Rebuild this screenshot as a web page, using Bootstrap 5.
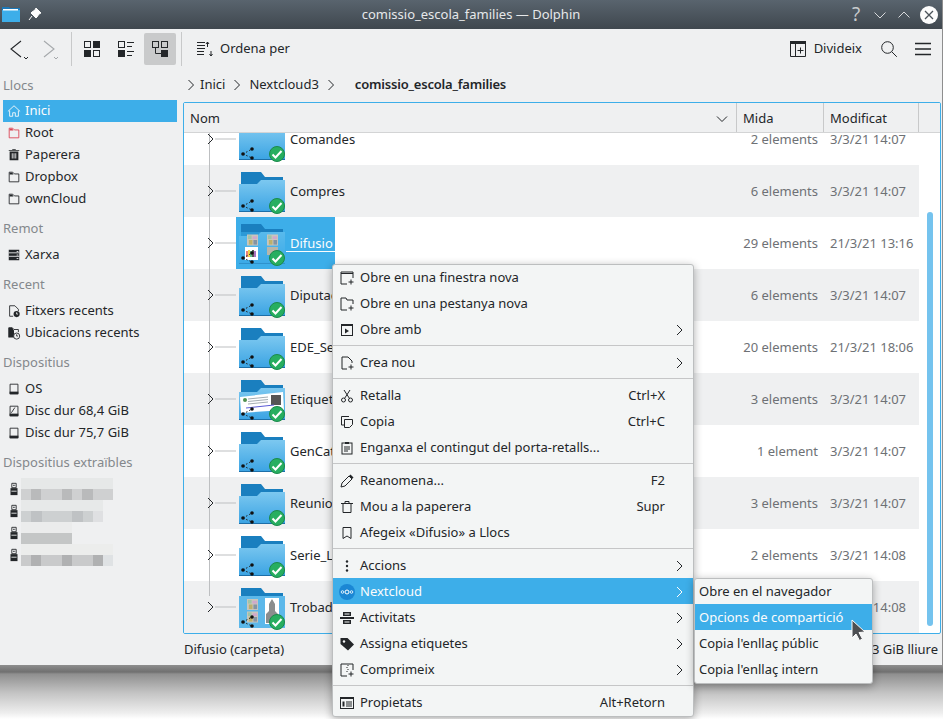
<!DOCTYPE html>
<html lang="ca">
<head>
  <meta charset="UTF-8">
  <title>comissio_escola_families — Dolphin</title>
  <meta name="viewport" content="width=device-width, initial-scale=1">
  <link href="https://cdn.jsdelivr.net/npm/bootstrap@5.3.3/dist/css/bootstrap.min.css" rel="stylesheet">
  <style>
    html, body { height: 719px; overflow: hidden; }
    body { position: relative; background: linear-gradient(#8e8e8e 0, #747474 6px, #707070 7px, #8f8f8f 9px, #c4c4c4 28px, #eeeeee 48px, #fff 54px) 0 665px / 100% 54px no-repeat #fff; font: 13px/1.2 "Noto Sans", sans-serif; color: #232629; }
    svg { display: block; flex: none; }
    .win { width: 942px; height: 665px; background: #eff0f1; box-shadow: 1px 0 0 #8e8e8e; }
    .titlebar { height: 29px; background: linear-gradient(#59646e, #3f474e); color: #fcfcfc; position: relative; }
    .wintitle { width: 100%; text-align: center; line-height: 29px; color: #e6e8ea; }
    .tb-left { position: absolute; left: 2px; top: 6px; }
    .tb-right { position: absolute; right: 4px; top: 5px; }
    .tb-help { width: 16px; font-size: 19px; line-height: 19px; color: #c8cbce; }
    .toolbar { height: 40px; padding: 0 11px 0 9px; }
    .tool-sep { width: 1px; height: 34px; background: #c8c9ca; }
    .tool-btn { width: 32px; height: 32px; border-radius: 2px; }
    .tool-on { background: #c9cacb; }
    .main { height: 596px; }
    .side { width: 183px; flex: none; }
    .side-head { height: 34px; padding: 9px 0 0 3px; color: #84888c; font-size: 13px; line-height: 18px; }
    .side-head-first { height: 31px; padding-top: 7px; }
    .side-item { height: 22px; margin: 0 6px 0 3px; padding-left: 4px; gap: 4px; }
    .side-on { background: #3daee9; color: #fcfcfc; }
    .blur-name { margin-left: -4px; }
    .right-pane { width: 758px; }
    .crumbs { height: 33px; padding: 0 0 1px 4px; font-size: 13px; }
    .crumbs b { font-weight: 600; letter-spacing: -.2px; margin-left: 12px; }
    .file-view { height: 532px; border: 1px solid #3daee9; border-radius: 2px; background: #fff; overflow: hidden; }
    .head-row { height: 30px; background: #eff0f1; border-bottom: 1px solid #d3d4d5; }
    .hcell { height: 29px; padding: 2px 0 0 6px; border-right: 1px solid #c8c9ca; }
    .c-name { width: 553px; }
    .c-size { width: 87px; }
    .c-date { width: 95px; }
    .file-list { width: 735px; height: 500px; overflow: hidden; }
    .file-rows { margin-top: -20px; }
    .frow { height: 52px; background: #fff; }
    .frow:nth-child(even) { background: #eff0f1; }
    .fname { padding: 2px 0 0 2px; width: 448px; flex: none; white-space: nowrap; }
    .fsize { width: 82px; flex: none; padding-top: 2px; text-align: right; color: #6e7175; }
    .fsize-sel { width: 483px; }
    .fdate { padding: 2px 0 0 12px; color: #6e7175; white-space: nowrap; }
    .sel-box { background: #3daee9; width: 99px; height: 52px; position: relative; flex: none; }
    .sel-name { color: #fcfcfc; padding: 2px 0 0 54px; }
    .sel-line { position: absolute; left: 50px; right: 0; top: 34px; height: 1px; background: #fcfcfc; }
    .track { width: 21px; }
    .thumb { width: 6px; height: 414px; margin: 79px 0 0 8px; background: #75c3ee; border-radius: 3px; }
    .statusbar { height: 31px; padding: 0 3px 0 1px; }
    .pop { position: absolute; background: #f3f5f5; border: 1px solid #bcbebf; border-radius: 3px; box-shadow: 0 2px 9px rgba(0,0,0,.32); }
    .menu-main { left: 332px; top: 264px; width: 362px; }
    .menu-sub { left: 694px; top: 578px; width: 179px; }
    .mi { height: 26px; padding: 0 13px 0 6px; gap: 5px; white-space: nowrap; }
    .menu-sub .mi { padding-left: 4px; }
    .mi-on { background: #3daee9; color: #fcfcfc; margin: -1px 0 1px; padding-top: 2px; }
    .menu-sub .mi-on { padding-top: 2px; }
    .mi-key { margin-left: auto; margin-right: 15px; }
    .mi-arrow { margin-left: auto; margin-right: -8px; }
    .msep { height: 7px; padding-top: 2px; }
    .msep i { display: block; height: 1px; background: #c5c6c7; }
    .pointer { position: absolute; left: 851px; top: 619px; }
  </style>
</head>
<body>

<svg width="0" height="0" style="position:absolute">
  <defs>
    <linearGradient id="fg" x1="0" y1="0" x2="0" y2="1"><stop offset="0" stop-color="#7cc8f0"/><stop offset="1" stop-color="#3aa3e3"/></linearGradient>
    <symbol id="folder" viewBox="0 0 52 52">
      <path d="M5 7h20l4 5h18v9H5z" fill="#1a7fbf"/>
      <path d="M3 19h18l4-4h24v32H3z" fill="url(#fg)"/>
      <rect x="3" y="46" width="46" height="1" fill="#1d6fa8"/>
    </symbol>
    <symbol id="overlay" viewBox="0 0 52 52">
      <path d="M7 41l9-5M7 41l9 4" stroke="#222" stroke-width="1" stroke-dasharray="1.5 2" fill="none"/>
      <circle cx="7" cy="41" r="1.8" fill="#111"/><circle cx="16" cy="36" r="1.8" fill="#111"/><circle cx="16" cy="45" r="1.8" fill="#111"/>
      <circle cx="41" cy="41" r="7.500" fill="#27ae60" stroke="#1b8a4b" stroke-width="1"/>
      <path d="M36.500 41.500l3 3 6-6.500" stroke="#fff" stroke-width="2" fill="none"/>
    </symbol>
    <symbol id="pic" viewBox="0 0 12 12">
      <rect width="12" height="12" fill="#c9c6bd"/>
      <rect x="1" y="1" width="4" height="4" fill="#9fc4a8"/><rect x="6" y="2" width="5" height="3" fill="#d0a8cb"/>
      <rect x="2" y="6" width="4" height="5" fill="#bdb06c"/><rect x="7" y="6" width="4" height="5" fill="#8494a3"/>
    </symbol>
    <symbol id="chev" viewBox="0 0 16 16"><path d="M5 3l5 5-5 5" fill="none" stroke="currentColor"/></symbol>
    <symbol id="win-plus" viewBox="0 0 16 16"><path d="M8 14H2V2h12v6" fill="none" stroke="currentColor"/><path d="M2 3.500h12" stroke="currentColor"/><path d="M12 9.500v5M9.500 12h5" stroke="currentColor"/></symbol>
    <symbol id="tab-plus" viewBox="0 0 16 16"><path d="M8 14H2V2h5l1 2h6v4" fill="none" stroke="currentColor"/><path d="M12 9.500v5M9.500 12h5" stroke="currentColor"/></symbol>
    <symbol id="doc-plus" viewBox="0 0 16 16"><path d="M8 14H3V2h6l4 4v2" fill="none" stroke="currentColor"/><path d="M12 9.500v5M9.500 12h5" stroke="currentColor"/></symbol>
    <symbol id="open-with" viewBox="0 0 16 16"><rect x="2.500" y="2.500" width="11" height="11" fill="none" stroke="currentColor"/><path d="M2 2h12v2H2z" fill="currentColor"/><path d="M6 6.500l4 2.500-4 2.500z" fill="currentColor"/></symbol>
    <symbol id="cut" viewBox="0 0 16 16"><circle cx="4.500" cy="12" r="2" fill="none" stroke="currentColor"/><circle cx="11.500" cy="12" r="2" fill="none" stroke="currentColor"/><path d="M5.500 10.500L11 2M10.500 10.500L5 2" stroke="currentColor" fill="none"/></symbol>
    <symbol id="copy" viewBox="0 0 16 16"><path d="M10 2.500H2.500V11H5" fill="none" stroke="currentColor"/><path d="M5.500 5.500h8v5l-3 3h-5z" fill="none" stroke="currentColor"/></symbol>
    <symbol id="paste" viewBox="0 0 16 16"><rect x="3" y="3" width="10" height="11" fill="none" stroke="currentColor"/><path d="M6 2h4v2H6z" fill="currentColor"/><path d="M5 7h6M5 9h6M5 11h4" stroke="currentColor"/></symbol>
    <symbol id="pencil" viewBox="0 0 16 16"><path d="M2 14l1-4 7-7 3 3-7 7z" fill="none" stroke="currentColor"/><path d="M10 3l1.500-1.500 3 3L13 6z" fill="currentColor"/></symbol>
    <symbol id="trash-o" viewBox="0 0 16 16"><path d="M2 4.500h12M6 4.500v-2h4v2M4 4.500v9h8v-9" fill="none" stroke="currentColor"/></symbol>
    <symbol id="bookmark" viewBox="0 0 16 16"><path d="M4 2.500h8v11l-4-2.500-4 2.500z" fill="none" stroke="currentColor"/></symbol>
    <symbol id="dots" viewBox="0 0 16 16"><circle cx="8" cy="3.500" r="1.200" fill="currentColor"/><circle cx="8" cy="8" r="1.200" fill="currentColor"/><circle cx="8" cy="12.500" r="1.200" fill="currentColor"/></symbol>
    <symbol id="activity" viewBox="0 0 16 16"><path d="M4 2h8v4H4zM1 7h14v2H1zM4 10h8v4H4z" fill="currentColor"/><path d="M5.500 12h5" stroke="#f3f5f5"/><path d="M5.500 4h5" stroke="#f3f5f5"/></symbol>
    <symbol id="tag" viewBox="0 0 16 16"><path d="M1.500 2h7l6.500 6.500-6 6L1.500 8z" fill="currentColor"/><circle cx="5" cy="5.500" r="1.200" fill="#f3f5f5"/></symbol>
    <symbol id="zip" viewBox="0 0 16 16"><path d="M8 14H2V2h12v6" fill="none" stroke="currentColor"/><path d="M9 3v1M8 5v1M9 7v1M8 9v1" stroke="currentColor"/><path d="M12 9.500v5M9.500 12h5" stroke="currentColor"/></symbol>
    <symbol id="props" viewBox="0 0 16 16"><rect x="1.500" y="2.500" width="13" height="11" fill="none" stroke="currentColor"/><path d="M1.500 2h13v2h-13z" fill="currentColor"/><path d="M3.500 6.500h2v5h-2z" fill="currentColor"/><path d="M7 7h6M7 9h6M7 11h6" stroke="currentColor"/></symbol>
    <symbol id="home" viewBox="0 0 16 16"><path d="M1 8.500l7-6.500 7 6.500M3 7.500v6.500h3.500V10h3v4H13V7.500" fill="none" stroke="currentColor"/></symbol>
    <symbol id="folder-o" viewBox="0 0 16 16"><path d="M2.500 13.500v-11h4l2 2h5v9z" fill="none" stroke="currentColor"/><path d="M3 3h3l1.500 2H3z" fill="currentColor"/></symbol>
    <symbol id="trash-f" viewBox="0 0 16 16"><path d="M3 4h10v10H3zM2 2.500h12v1H2zM6 1h4v1H6z" fill="currentColor"/><path d="M6 6v6M8 6v6M10 6v6" stroke="#eff0f1"/></symbol>
    <symbol id="network" viewBox="0 0 16 16"><path d="M2 2h12v12H2z" fill="currentColor"/><path d="M2 5.500h12M2 9.500h12" stroke="#eff0f1"/><path d="M11 4h2M11 8h2M11 12h2" stroke="#eff0f1"/></symbol>
    <symbol id="doc-clock" viewBox="0 0 16 16"><path d="M7 14H3V2h6l4 4v2" fill="none" stroke="currentColor"/><circle cx="11" cy="11.500" r="3.500" fill="currentColor"/><path d="M11 9.500v2h1.500" stroke="#eff0f1" fill="none"/></symbol>
    <symbol id="folder-clock" viewBox="0 0 16 16"><path d="M2 13V2h4l2 2h5v3" fill="none" stroke="currentColor"/><path d="M2 2h4l2 3H2zM2 5h6v8H2z" fill="currentColor"/><circle cx="11" cy="11.500" r="3.500" fill="#eff0f1" stroke="currentColor"/><path d="M11 9.500v2h1.500" stroke="currentColor" fill="none"/></symbol>
    <symbol id="drive" viewBox="0 0 16 16"><path d="M3.500 2.500h9v11h-9z" fill="none" stroke="currentColor"/><path d="M3 11h10v3H3z" fill="currentColor"/></symbol>
    <symbol id="drive-x" viewBox="0 0 16 16"><path d="M3.500 2.500h9v11h-9z" fill="none" stroke="currentColor"/><path d="M3 11h10v3H3z" fill="currentColor"/><path d="M5 10l4-6" stroke="currentColor"/></symbol>
    <symbol id="usb" viewBox="0 0 16 16"><path d="M5.500 1.500h5v5h-5z" fill="none" stroke="currentColor"/><path d="M7 3h.8v1.500H7zM8.500 3h.8v1.500h-.8z" fill="currentColor"/><path d="M4 7h8v8H4z" fill="currentColor"/><path d="M5 10.500h6" stroke="#eff0f1"/></symbol>
  </defs>
</svg>

<div class="win">
  <div class="titlebar d-flex align-items-center">
    <div class="tb-left d-flex align-items-center gap-2">
      <svg width="18" height="16" viewBox="0 0 18 16"><path d="M0 1h7l1 1h10v13H0z" fill="#1c78b8"/><path d="M0 4h18v12H0z" fill="#3daee9"/><path d="M1 3h15v1.500H1z" fill="#fff"/></svg>
      <svg width="14" height="14" viewBox="0 0 14 14"><path d="M8 1l5 5-2 1-2 3-1 1-5-5 1-1 3-2zM4 9l-3 4" fill="#fcfcfc" stroke="#fcfcfc"/></svg>
    </div>
    <div class="wintitle">comissio_escola_families — Dolphin</div>
    <div class="tb-right d-flex align-items-center gap-2">
      <span class="tb-help text-center">?</span>
      <svg width="16" height="16" viewBox="0 0 16 16"><path d="M2.500 5.500L8 11l5.500-5.500" fill="none" stroke="#d8dadc"/></svg>
      <svg width="16" height="16" viewBox="0 0 16 16"><path d="M2.500 10.500L8 5l5.500 5.500" fill="none" stroke="#d8dadc"/></svg>
      <svg width="18" height="18" viewBox="0 0 18 18"><circle cx="9" cy="9" r="9" fill="#fcfcfc"/><path d="M5 5l8 8M13 5l-8 8" stroke="#4a5259" stroke-width="1.300"/></svg>
    </div>
  </div>

  <div class="toolbar d-flex align-items-center">
    <svg width="22" height="28" viewBox="0 0 22 28"><path d="M12 6L2 14l10 8" fill="none" stroke="#232629" stroke-width="1.100"/><path d="M15 22l2 2 2-2" fill="none" stroke="#232629"/></svg>
    <svg class="ms-2" width="22" height="28" viewBox="0 0 22 28"><path d="M5 6l10 8-10 8" fill="none" stroke="#a5a8ab" stroke-width="1.100"/><path d="M15 22l2 2 2-2" fill="none" stroke="#a5a8ab"/></svg>
    <div class="tool-sep" style="margin-left:10px"></div>
    <div class="tool-btn d-flex align-items-center justify-content-center ms-1">
      <svg width="16" height="16" viewBox="0 0 16 16"><rect x=".5" y=".5" width="6" height="6" fill="none" stroke="#232629"/><rect x="9" width="7" height="7" fill="#232629"/><rect y="9" width="7" height="7" fill="#232629"/><rect x="9.500" y="9.500" width="6" height="6" fill="none" stroke="#232629"/></svg>
    </div>
    <div class="tool-btn d-flex align-items-center justify-content-center" style="margin-left:2px">
      <svg width="16" height="16" viewBox="0 0 16 16"><rect x=".5" y=".5" width="6" height="6" fill="none" stroke="#232629"/><rect y="9" width="7" height="7" fill="#232629"/><path d="M9 1.500h7M9 5.500h5M9 10.500h7M9 14.500h5" stroke="#232629"/></svg>
    </div>
    <div class="tool-btn tool-on d-flex align-items-center justify-content-center" style="margin-left:2px">
      <svg width="16" height="16" viewBox="0 0 16 16"><rect x=".5" y=".5" width="6" height="6" fill="none" stroke="#232629"/><rect x="9.500" y=".5" width="6" height="6" fill="none" stroke="#232629"/><path d="M3.500 7v5.500H9" fill="none" stroke="#232629"/><rect x="9" y="9" width="7" height="7" fill="#232629"/></svg>
    </div>
    <div class="tool-sep" style="margin-left:5px"></div>
    <svg width="16" height="16" viewBox="0 0 16 16" style="margin-left:15px"><path d="M0 1.500h8M0 4.500h8M0 7.500h8M0 10.500h7M0 13.500h7" stroke="#232629"/><path d="M10.500 6V1m0 0L9 3m1.500-2L12 3M14 10v5m0 0l-1.500-2m1.500 2l1.500-2" stroke="#232629" fill="none"/></svg>
    <span style="margin-left:7px">Ordena per</span>
    <svg class="ms-auto" width="16" height="16" viewBox="0 0 16 16"><path d="M.5 2.500h15v13H.5zM5.500 2.500v13" fill="none" stroke="#232629"/><path d="M0 0h16v3H0z" fill="#232629"/><path d="M10.500 6.500v6M7.500 9.500h6" stroke="#232629"/></svg>
    <span class="ms-2">Divideix</span>
    <svg width="16" height="16" viewBox="0 0 16 16" style="margin-left:19px"><circle cx="6.500" cy="6.500" r="5.800" fill="none" stroke="#232629"/><path d="M10.800 10.800l5 5" stroke="#232629"/></svg>
    <svg width="16" height="16" viewBox="0 0 16 16" style="margin-left:18px"><path d="M0 2.500h16M0 8h16M0 13.500h16" stroke="#232629" stroke-width="1.700"/></svg>
  </div>

  <div class="main d-flex">
    <div class="side">
      <div class="side-head side-head-first">Llocs</div>
      <div class="side-item side-on d-flex align-items-center"><svg width="14" height="14"><use href="#home"/></svg><span>Inici</span></div>
      <div class="side-item d-flex align-items-center"><svg width="14" height="14" style="color:#da4453"><use href="#folder-o"/></svg><span>Root</span></div>
      <div class="side-item d-flex align-items-center"><svg width="14" height="14"><use href="#trash-f"/></svg><span>Paperera</span></div>
      <div class="side-item d-flex align-items-center"><svg width="14" height="14"><use href="#folder-o"/></svg><span>Dropbox</span></div>
      <div class="side-item d-flex align-items-center"><svg width="14" height="14"><use href="#folder-o"/></svg><span>ownCloud</span></div>
      <div class="side-head">Remot</div>
      <div class="side-item d-flex align-items-center"><svg width="14" height="14"><use href="#network"/></svg><span>Xarxa</span></div>
      <div class="side-head">Recent</div>
      <div class="side-item d-flex align-items-center"><svg width="14" height="14"><use href="#doc-clock"/></svg><span>Fitxers recents</span></div>
      <div class="side-item d-flex align-items-center"><svg width="14" height="14"><use href="#folder-clock"/></svg><span>Ubicacions recents</span></div>
      <div class="side-head">Dispositius</div>
      <div class="side-item d-flex align-items-center"><svg width="14" height="14"><use href="#drive"/></svg><span>OS</span></div>
      <div class="side-item d-flex align-items-center"><svg width="14" height="14"><use href="#drive-x"/></svg><span>Disc dur 68,4 GiB</span></div>
      <div class="side-item d-flex align-items-center"><svg width="14" height="14"><use href="#drive"/></svg><span>Disc dur 75,7 GiB</span></div>
      <div class="side-head">Dispositius extraïbles</div>
      <div class="side-item d-flex align-items-center"><svg width="14" height="14"><use href="#usb"/></svg>
        <svg class="blur-name" width="92" height="22" viewBox="0 0 9 2" preserveAspectRatio="none" shape-rendering="crispEdges"><path d="M0 0h9v1H0z" fill="#e6e8e8"/><path d="M0 1h9v1H0z" fill="#cfd0d1"/><path d="M1 1h1v1H1zM4 1h1v1H4zM6 1h1v1H6z" fill="#b9babb"/></svg></div>
      <div class="side-item d-flex align-items-center"><svg width="14" height="14"><use href="#usb"/></svg>
        <svg class="blur-name" width="82" height="22" viewBox="0 0 8 2" preserveAspectRatio="none" shape-rendering="crispEdges"><path d="M0 0h8v1H0z" fill="#e7e9e9"/><path d="M0 1h8v1H0z" fill="#cdd0d1"/><path d="M1 1h1v1H1zM5 1h1v1H5z" fill="#bfc2c4"/><path d="M7 1h1v1H7z" fill="#dfe0e2"/></svg></div>
      <div class="side-item d-flex align-items-center"><svg width="14" height="14"><use href="#usb"/></svg>
        <svg class="blur-name" width="51" height="22" viewBox="0 0 5 2" preserveAspectRatio="none" shape-rendering="crispEdges"><path d="M0 0h5v1H0z" fill="#ebecec"/><path d="M0 1h5v1H0z" fill="#c4c6c6"/></svg></div>
      <div class="side-item d-flex align-items-center"><svg width="14" height="14"><use href="#usb"/></svg>
        <svg class="blur-name" width="92" height="22" viewBox="0 0 9 2" preserveAspectRatio="none" shape-rendering="crispEdges"><path d="M0 0h9v1H0z" fill="#ecedec"/><path d="M0 1h9v1H0z" fill="#c9cacb"/><path d="M1 1h1v1H1zM4 1h1v1H4zM7 1h1v1H7z" fill="#b0b1b2"/><path d="M8 1h1v1H8z" fill="#dfe2e4"/></svg></div>
    </div>

    <div class="right-pane">
      <div class="crumbs d-flex align-items-center">
        <svg width="8" height="12" viewBox="0 0 8 12"><path d="M1.500 1l5 5-5 5" fill="none" stroke="#232629"/></svg>
        <span style="margin-left:5px">Inici</span>
        <svg class="mx-2" width="8" height="12" viewBox="0 0 8 12"><path d="M1.500 1l5 5-5 5" fill="none" stroke="#232629"/></svg>
        <span>Nextcloud3</span>
        <svg class="mx-2" width="8" height="12" viewBox="0 0 8 12"><path d="M1.500 1l5 5-5 5" fill="none" stroke="#232629"/></svg>
        <b>comissio_escola_families</b>
      </div>

      <div class="file-view">
        <div class="head-row d-flex">
          <div class="hcell c-name d-flex align-items-center justify-content-between pe-2"><span>Nom</span>
            <svg width="12" height="12" viewBox="0 0 12 12"><path d="M1 3.500l5 5 5-5" fill="none" stroke="#232629"/></svg></div>
          <div class="hcell c-size d-flex align-items-center">Mida</div>
          <div class="hcell c-date d-flex align-items-center">Modificat</div>
        </div>
        <div class="d-flex">
          <div class="file-list">
            <div class="file-rows">
              <div class="frow d-flex align-items-center">
                <svg width="52" height="52"><path d="M25.500 0v52M31 26h21" stroke="#bdbfc1"/><path d="M24 21l5 5-5 5" fill="none" stroke="#232629"/></svg>
                <svg width="52" height="52"><use href="#folder"/><use href="#overlay"/></svg>
                <span class="fname">Comandes</span><span class="fsize">2 elements</span><span class="fdate">3/3/21 14:07</span>
              </div>
              <div class="frow d-flex align-items-center">
                <svg width="52" height="52"><path d="M25.500 0v52M31 26h21" stroke="#bdbfc1"/><path d="M24 21l5 5-5 5" fill="none" stroke="#232629"/></svg>
                <svg width="52" height="52"><use href="#folder"/><use href="#overlay"/></svg>
                <span class="fname">Compres</span><span class="fsize">6 elements</span><span class="fdate">3/3/21 14:07</span>
              </div>
              <div class="frow d-flex align-items-center">
                <svg width="52" height="52"><path d="M25.500 0v52M31 26h21" stroke="#bdbfc1"/><path d="M24 21l5 5-5 5" fill="none" stroke="#232629"/></svg>
                <div class="sel-box d-flex align-items-center">
                  <svg class="position-absolute top-0 start-0" width="52" height="52"><use href="#folder"/><rect x="3" y="15" width="46" height="32" fill="#3daee9" opacity=".55"/><use href="#pic" x="11" y="16" width="11" height="14"/><use href="#pic" x="31" y="16" width="11" height="14"/><rect x="31" y="30" width="11" height="8" fill="#b9b6a9"/><rect x="9" y="30" width="13" height="13" fill="#fff"/><path d="M11 40v-6" stroke="#e2574c" stroke-width="1.500"/><path d="M13 40v-7" stroke="#f1c40f" stroke-width="1.500"/><path d="M15 40v-6" stroke="#27ae60" stroke-width="1.500"/><path d="M17 40v-7" stroke="#222" stroke-width="1.500"/><path d="M19 40v-6" stroke="#8e44ad" stroke-width="1.500"/><use href="#overlay"/></svg>
                  <span class="sel-name">Difusio</span><div class="sel-line"></div>
                </div>
                <span class="fsize fsize-sel">29 elements</span><span class="fdate">21/3/21 13:16</span>
              </div>
              <div class="frow d-flex align-items-center">
                <svg width="52" height="52"><path d="M25.500 0v52M31 26h21" stroke="#bdbfc1"/><path d="M24 21l5 5-5 5" fill="none" stroke="#232629"/></svg>
                <svg width="52" height="52"><use href="#folder"/><use href="#overlay"/></svg>
                <span class="fname">Diputació</span><span class="fsize">6 elements</span><span class="fdate">3/3/21 14:07</span>
              </div>
              <div class="frow d-flex align-items-center">
                <svg width="52" height="52"><path d="M25.500 0v52M31 26h21" stroke="#bdbfc1"/><path d="M24 21l5 5-5 5" fill="none" stroke="#232629"/></svg>
                <svg width="52" height="52"><use href="#folder"/><use href="#overlay"/></svg>
                <span class="fname">EDE_Serveis</span><span class="fsize">20 elements</span><span class="fdate">21/3/21 18:06</span>
              </div>
              <div class="frow d-flex align-items-center">
                <svg width="52" height="52"><path d="M25.500 0v52M31 26h21" stroke="#bdbfc1"/><path d="M24 21l5 5-5 5" fill="none" stroke="#232629"/></svg>
                <svg width="52" height="52"><use href="#folder"/><path d="M4 24l43-5 1 18-43 3z" fill="#fff"/><rect x="35" y="22" width="10" height="10" fill="#555"/><path d="M12 26l20-2M12 28.500l20-2M12 31l20-2" stroke="#a4adb2"/><path d="M10 35l28-3" stroke="#5b5bd6"/><circle cx="9" cy="27" r="2" fill="#4f8f4f"/><use href="#overlay"/></svg>
                <span class="fname">Etiquetes</span><span class="fsize">3 elements</span><span class="fdate">3/3/21 14:07</span>
              </div>
              <div class="frow d-flex align-items-center">
                <svg width="52" height="52"><path d="M25.500 0v52M31 26h21" stroke="#bdbfc1"/><path d="M24 21l5 5-5 5" fill="none" stroke="#232629"/></svg>
                <svg width="52" height="52"><use href="#folder"/><use href="#overlay"/></svg>
                <span class="fname">GenCat</span><span class="fsize">1 element</span><span class="fdate">3/3/21 14:07</span>
              </div>
              <div class="frow d-flex align-items-center">
                <svg width="52" height="52"><path d="M25.500 0v52M31 26h21" stroke="#bdbfc1"/><path d="M24 21l5 5-5 5" fill="none" stroke="#232629"/></svg>
                <svg width="52" height="52"><use href="#folder"/><use href="#overlay"/></svg>
                <span class="fname">Reunions</span><span class="fsize">3 elements</span><span class="fdate">3/3/21 14:07</span>
              </div>
              <div class="frow d-flex align-items-center">
                <svg width="52" height="52"><path d="M25.500 0v52M31 26h21" stroke="#bdbfc1"/><path d="M24 21l5 5-5 5" fill="none" stroke="#232629"/></svg>
                <svg width="52" height="52"><use href="#folder"/><use href="#overlay"/></svg>
                <span class="fname">Serie_L</span><span class="fsize">2 elements</span><span class="fdate">3/3/21 14:08</span>
              </div>
              <div class="frow d-flex align-items-center">
                <svg width="52" height="52"><path d="M25.500 0v15M31 26h21" stroke="#bdbfc1"/><path d="M24 21l5 5-5 5" fill="none" stroke="#232629"/></svg>
                <svg width="52" height="52"><use href="#folder"/><rect x="3" y="15" width="46" height="32" fill="#5cb8ea"/><use href="#pic" x="11" y="17" width="11" height="13"/><use href="#pic" x="11" y="30" width="11" height="12"/><rect x="29" y="17" width="14" height="26" fill="#fff"/><path d="M36 18l3 5v7l3 3v9H30v-9l3-3v-7z" fill="#8a8d8e"/><use href="#overlay"/></svg>
                <span class="fname">Trobada</span><span class="fsize">2 elements</span><span class="fdate">3/3/21 14:08</span>
              </div>
            </div>
          </div>
          <div class="track"><div class="thumb"></div></div>
        </div>
      </div>

      <div class="statusbar d-flex align-items-center justify-content-between">
        <span>Difusio (carpeta)</span><span>3 GiB lliure</span>
      </div>
    </div>
  </div>
</div>

<div class="pop menu-main">
  <div class="mi d-flex align-items-center"><svg width="16" height="16"><use href="#win-plus"/></svg><span>Obre en una finestra nova</span></div>
  <div class="mi d-flex align-items-center"><svg width="16" height="16"><use href="#tab-plus"/></svg><span>Obre en una pestanya nova</span></div>
  <div class="mi d-flex align-items-center"><svg width="16" height="16"><use href="#open-with"/></svg><span>Obre amb</span><svg class="mi-arrow" width="16" height="16"><use href="#chev"/></svg></div>
  <div class="msep"><i></i></div>
  <div class="mi d-flex align-items-center"><svg width="16" height="16"><use href="#doc-plus"/></svg><span>Crea nou</span><svg class="mi-arrow" width="16" height="16"><use href="#chev"/></svg></div>
  <div class="msep"><i></i></div>
  <div class="mi d-flex align-items-center"><svg width="16" height="16"><use href="#cut"/></svg><span>Retalla</span><span class="mi-key">Ctrl+X</span></div>
  <div class="mi d-flex align-items-center"><svg width="16" height="16"><use href="#copy"/></svg><span>Copia</span><span class="mi-key">Ctrl+C</span></div>
  <div class="mi d-flex align-items-center"><svg width="16" height="16"><use href="#paste"/></svg><span>Enganxa el contingut del porta-retalls...</span></div>
  <div class="msep"><i></i></div>
  <div class="mi d-flex align-items-center"><svg width="16" height="16"><use href="#pencil"/></svg><span>Reanomena...</span><span class="mi-key">F2</span></div>
  <div class="mi d-flex align-items-center"><svg width="16" height="16"><use href="#trash-o"/></svg><span>Mou a la paperera</span><span class="mi-key">Supr</span></div>
  <div class="mi d-flex align-items-center"><svg width="16" height="16"><use href="#bookmark"/></svg><span>Afegeix «Difusio» a Llocs</span></div>
  <div class="msep"><i></i></div>
  <div class="mi d-flex align-items-center"><svg width="16" height="16"><use href="#dots"/></svg><span>Accions</span><svg class="mi-arrow" width="16" height="16"><use href="#chev"/></svg></div>
  <div class="mi mi-on d-flex align-items-center">
    <svg width="16" height="16" viewBox="0 0 16 16"><circle cx="8" cy="8" r="8" fill="#1b87d4"/><circle cx="8" cy="8" r="2" fill="none" stroke="#fff"/><circle cx="3.500" cy="8" r="1.300" fill="none" stroke="#fff" stroke-width=".8"/><circle cx="12.500" cy="8" r="1.300" fill="none" stroke="#fff" stroke-width=".8"/></svg>
    <span>Nextcloud</span><svg class="mi-arrow" width="16" height="16"><use href="#chev"/></svg></div>
  <div class="mi d-flex align-items-center"><svg width="16" height="16"><use href="#activity"/></svg><span>Activitats</span><svg class="mi-arrow" width="16" height="16"><use href="#chev"/></svg></div>
  <div class="mi d-flex align-items-center"><svg width="16" height="16"><use href="#tag"/></svg><span>Assigna etiquetes</span><svg class="mi-arrow" width="16" height="16"><use href="#chev"/></svg></div>
  <div class="mi d-flex align-items-center"><svg width="16" height="16"><use href="#zip"/></svg><span>Comprimeix</span><svg class="mi-arrow" width="16" height="16"><use href="#chev"/></svg></div>
  <div class="msep"><i></i></div>
  <div class="mi d-flex align-items-center"><svg width="16" height="16"><use href="#props"/></svg><span>Propietats</span><span class="mi-key">Alt+Retorn</span></div>
</div>

<div class="pop menu-sub">
  <div class="mi d-flex align-items-center">Obre en el navegador</div>
  <div class="mi mi-on d-flex align-items-center">Opcions de compartició</div>
  <div class="mi d-flex align-items-center">Copia l'enllaç públic</div>
  <div class="mi d-flex align-items-center">Copia l'enllaç intern</div>
</div>

<svg class="pointer" width="16" height="22" viewBox="0 0 16 22"><path d="M1 1l13 12-6 .5 3.500 6.500-3 1.500L5 15l-4 4z" fill="#4d4f52" stroke="#fcfcfc"/></svg>

</body>
</html>
